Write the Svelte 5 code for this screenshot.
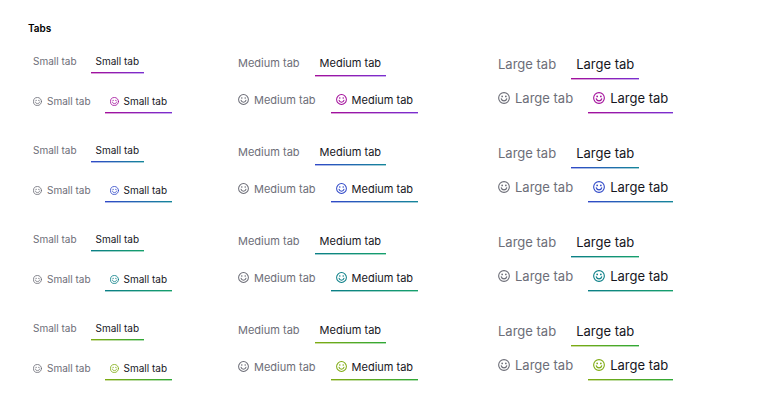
<script>
  const sizes = [
    { id: 'small', label: 'Small tab' },
    { id: 'medium', label: 'Medium tab' },
    { id: 'large', label: 'Large tab' },
  ];

  const themes = ['purple', 'blue', 'teal', 'green'];

  let selected = $state({});

  const isActive = (key, index) => (selected[key] ?? 1) === index;
</script>

{#snippet smiley()}
  <svg class="icon" viewBox="0 0 24 24" aria-hidden="true">
    <circle cx="12" cy="12" r="10.7" />
    <path d="M6.500 13.500c.8 2.900 2.900 4.300 5.500 4.300s4.700-1.400 5.500-4.300" />
    <circle class="eye" cx="8.300" cy="8.800" r="1.700" />
    <circle class="eye" cx="15.700" cy="8.800" r="1.700" />
  </svg>
{/snippet}

<main class="page">
  <h1>Tabs</h1>

  <div class="groups">
    {#each themes as theme}
      <section class="group {theme}">
        {#each sizes as size}
          <div class="column {size.id}">
            {#each [false, true] as withIcon}
              {@const key = `${theme}-${size.id}-${withIcon}`}
              <div class="tabs" role="tablist" aria-label="{size.label}s, {theme}">
                {#each [0, 1] as index}
                  <button
                    type="button"
                    role="tab"
                    class="tab"
                    class:active={isActive(key, index)}
                    aria-selected={isActive(key, index)}
                    onclick={() => (selected[key] = index)}
                  >
                    {#if withIcon}{@render smiley()}{/if}
                    <span>{size.label}</span>
                  </button>
                {/each}
              </div>
            {/each}
          </div>
        {/each}
      </section>
    {/each}
  </div>
</main>

<style>
  :global(body) { margin: 0; background: #fff; }

  .page {
    padding: 20px 28px;
    font-family: Inter, "Noto Sans", sans-serif;
    color: #16161d;
  }

  h1 {
    margin: 0 0 15px;
    font-size: 10px; line-height: 16px; font-weight: 600;
    color: #000;
  }

  .groups { display: flex; flex-direction: column; gap: 27px; }

  .group {
    display: grid;
    grid-template-columns: 205fr 260fr 238fr;
  }

  /* Rows of every size start and end on the same lines */
  .column {
    display: flex; flex-direction: column;
    justify-content: space-between; gap: 6px;
  }

  .tabs { display: flex; gap: 10px; }

  .tab {
    position: relative;
    display: flex; align-items: center; gap: 5px;
    margin: 0; padding: 0 5px 2px;
    border: 0; background: none;
    font: inherit; color: #6d6e78;
    white-space: nowrap; cursor: pointer;
  }
  .tab.active { color: #16161d; }

  /* Underline: a solid row with a softer one below it */
  .tab.active::after {
    content: ""; position: absolute; left: 0; right: 0; bottom: -1px;
    height: 2px;
    background:
      linear-gradient(rgba(255,255,255,.6), rgba(255,255,255,.6)) bottom / 100% 1px no-repeat,
      linear-gradient(90deg, var(--from), var(--to));
  }

  .icon {
    flex: none;
    fill: none; stroke: currentColor; stroke-width: 2.2;
    stroke-linecap: round;
  }
  .icon .eye { fill: currentColor; stroke: none; }
  .active .icon { color: var(--from); }

  .small .tabs { gap: 9px; }
  .small .tab { height: 22px; font-size: 10px; }
  .small .icon { width: 9px; height: 9px; }
  .medium .tab { height: 25px; font-size: 11px; }
  .medium .icon { width: 11px; height: 11px; }
  .large .tab { height: 28px; font-size: 13px; }
  .large .icon { width: 12px; height: 12px; }

  .purple { --from: #a30f9b; --to: #7a2fd0; }
  .blue { --from: #3049c8; --to: #15869a; }
  .teal { --from: #0b7f87; --to: #16a06c; }
  .green { --from: #7fab12; --to: #2fa836; }
</style>
